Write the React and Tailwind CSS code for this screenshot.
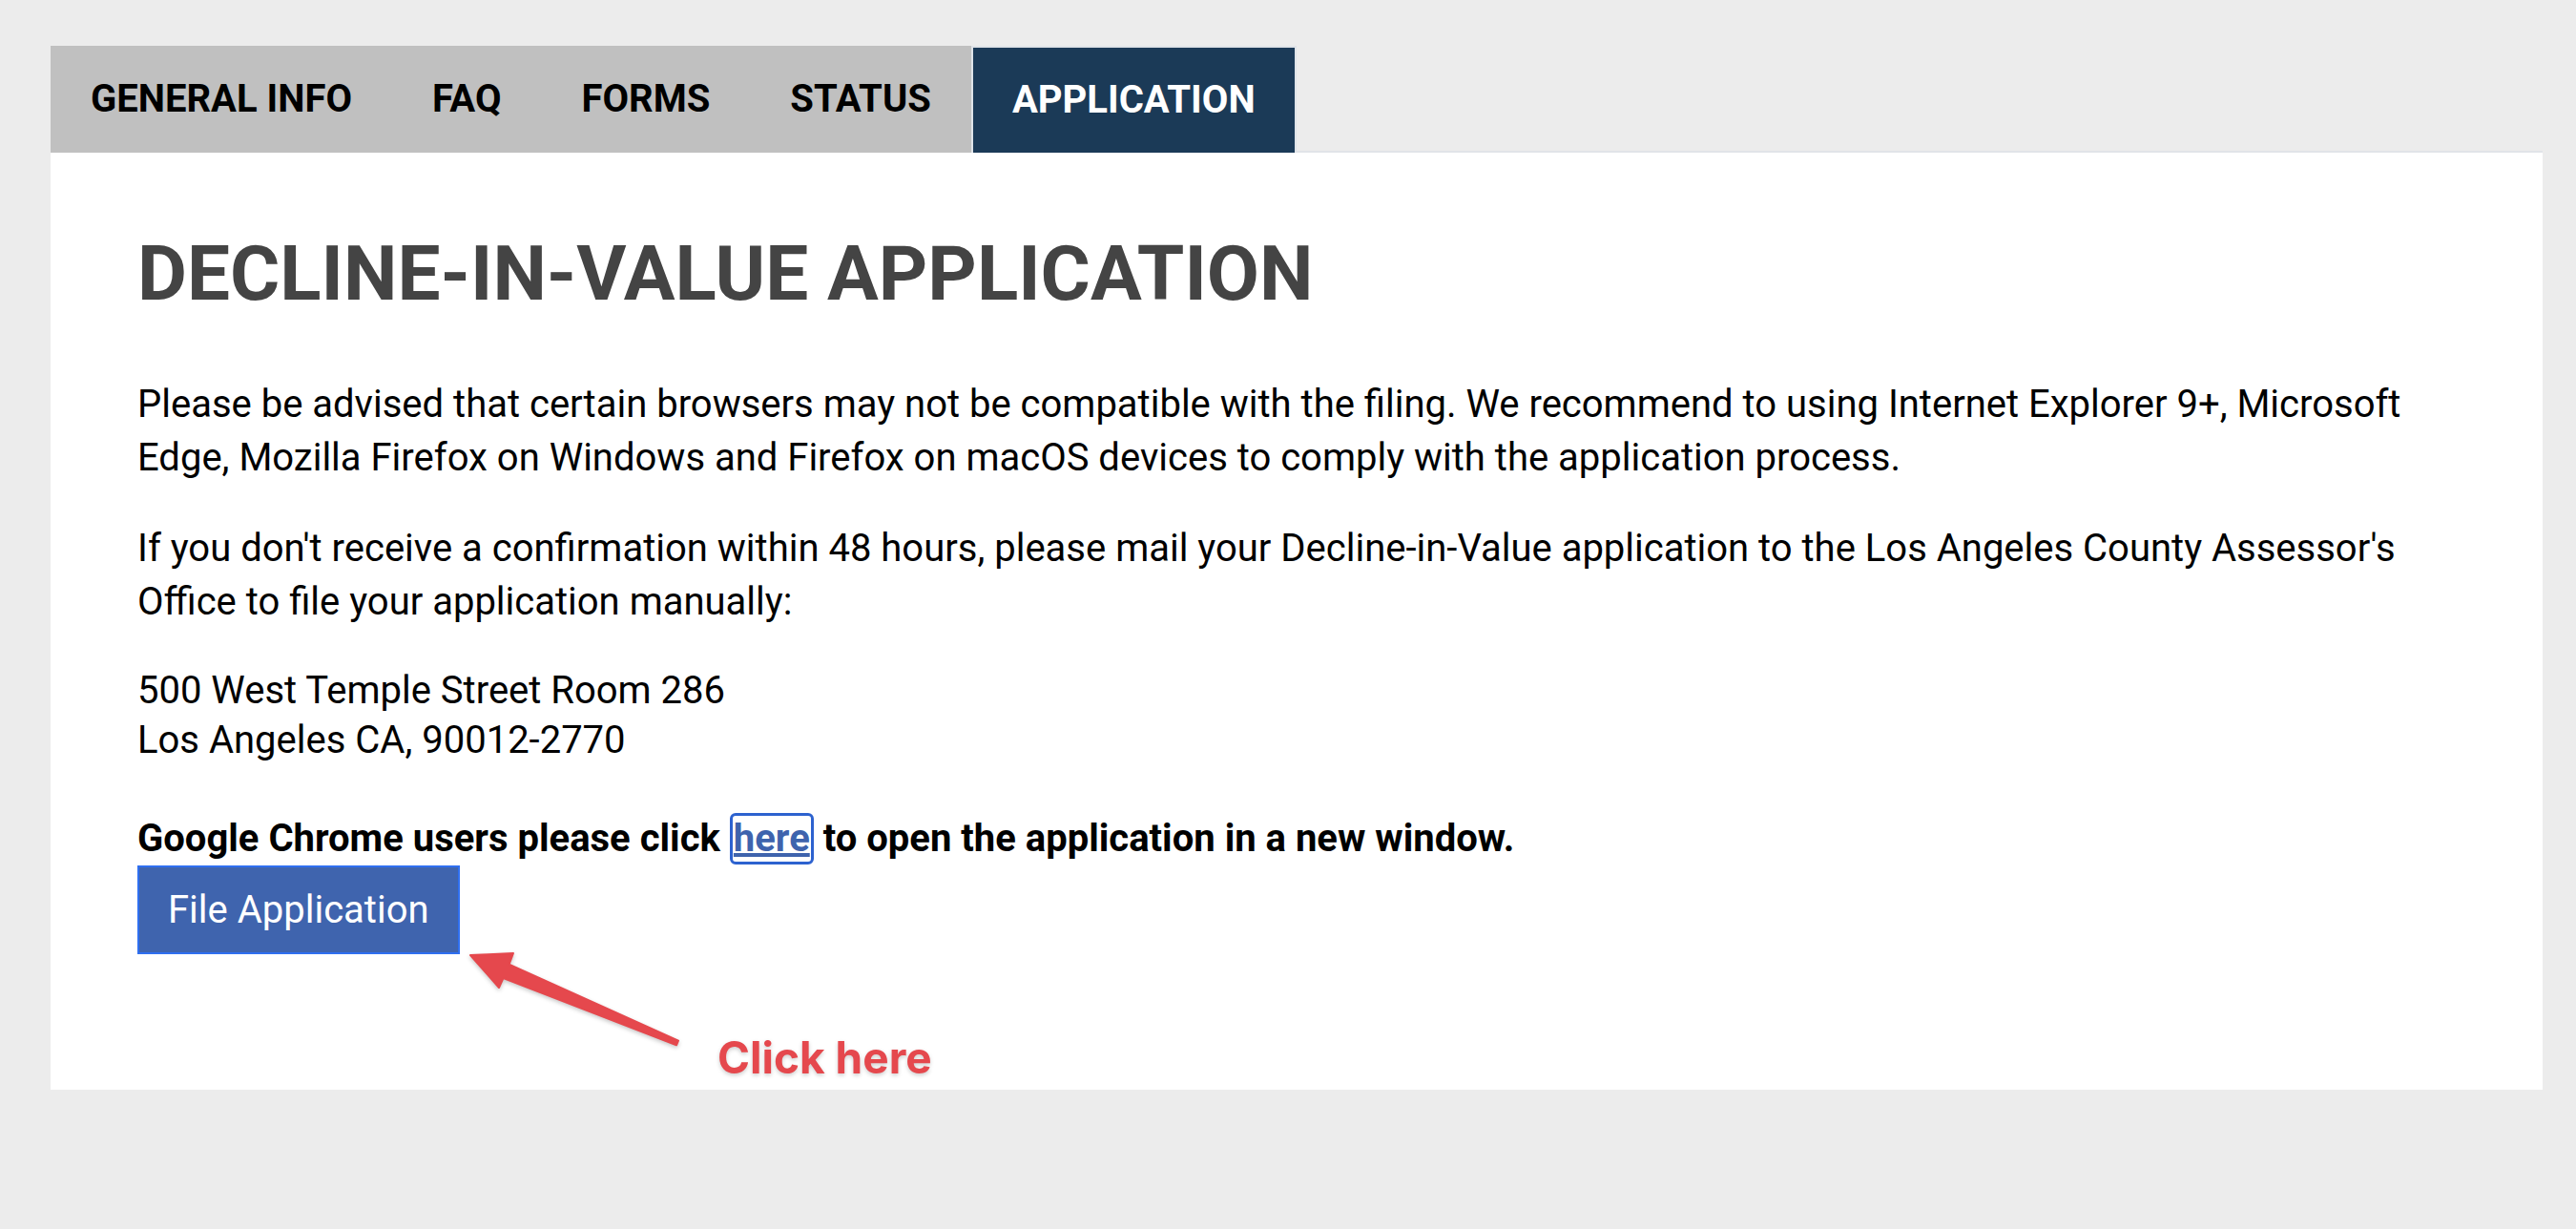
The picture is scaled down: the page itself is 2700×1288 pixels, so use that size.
import React from "react";

function Tab({ children }) {
  return (
    <div className="flex h-full items-center px-[42px] text-[40px] font-bold text-black">
      {children}
    </div>
  );
}

export default function App() {
  return (
    <div className="min-h-screen bg-[#ececec] pl-[53px] pr-[35px] pt-[48px] font-['Roboto',sans-serif]">
      <div className="flex h-[112px] items-end">
        <div className="flex h-full bg-[#c0c0c0]">
          <Tab>GENERAL INFO</Tab>
          <Tab>FAQ</Tab>
          <Tab>FORMS</Tab>
          <Tab>STATUS</Tab>
        </div>
        <div className="flex h-full items-center border-2 border-b-0 border-[#dfe3e8] bg-[#1b3a57] px-[41px] text-[40px] font-bold text-white">
          APPLICATION
        </div>
        <div className="flex-1 border-b-2 border-[#e1e4e8]" />
      </div>

      <div className="relative bg-white pb-[142px] pl-[91px] pr-[91px] pt-[82px] text-black">
        <h1 className="mb-[64px] text-[80px] font-bold leading-[90px] text-[#444444]">
          DECLINE-IN-VALUE APPLICATION
        </h1>
        <p className="mb-[39px] text-[40px] leading-[56px]">
          Please be advised that certain browsers may not be compatible with the filing. We recommend to using
          Internet Explorer 9+, Microsoft Edge, Mozilla Firefox on Windows and Firefox on macOS devices to comply
          with the application process.
        </p>
        <p className="mb-[39px] text-[40px] leading-[56px]">
          If you don't receive a confirmation within 48 hours, please mail your Decline-in-Value application to the
          Los Angeles County Assessor's Office to file your application manually:
        </p>
        <p className="mb-[49px] text-[40px] leading-[52px]">
          500 West Temple Street Room 286
          <br />
          Los Angeles CA, 90012-2770
        </p>
        <p className="text-[40px] font-bold leading-[56px]">
          Google Chrome users please click{" "}
          <a
            href="#"
            className="inline-block rounded-[6px] border-[3px] border-[#2d62cf] px-[1px] leading-[48px] text-[#3e63ad] underline"
          >
            here
          </a>{" "}
          to open the application in a new window.
        </p>
        <button className="border-2 border-[#2f6ff0] bg-[#3f64ae] px-[30px] py-[17px] text-[40px] leading-[55px] text-white">
          File Application
        </button>

        <svg
          className="pointer-events-none absolute left-0 top-0 h-full w-full drop-shadow-[0_2px_2px_rgba(0,0,0,0.22)]"
          xmlns="http://www.w3.org/2000/svg"
        >
          <polygon
            points="440,841 485,839 480.6,850.7 658,930.7 656,935.3 474.5,865 470,875"
            fill="#e5484d"
            stroke="#e5484d"
            strokeWidth="2"
            strokeLinejoin="round"
          />
        </svg>
        <div className="absolute left-[699px] top-[920px] font-['Inter',sans-serif] text-[46px] font-bold leading-[56px] text-[#e5484d] drop-shadow-[0_2px_2px_rgba(0,0,0,0.2)]">
          Click here
        </div>
      </div>
    </div>
  );
}
